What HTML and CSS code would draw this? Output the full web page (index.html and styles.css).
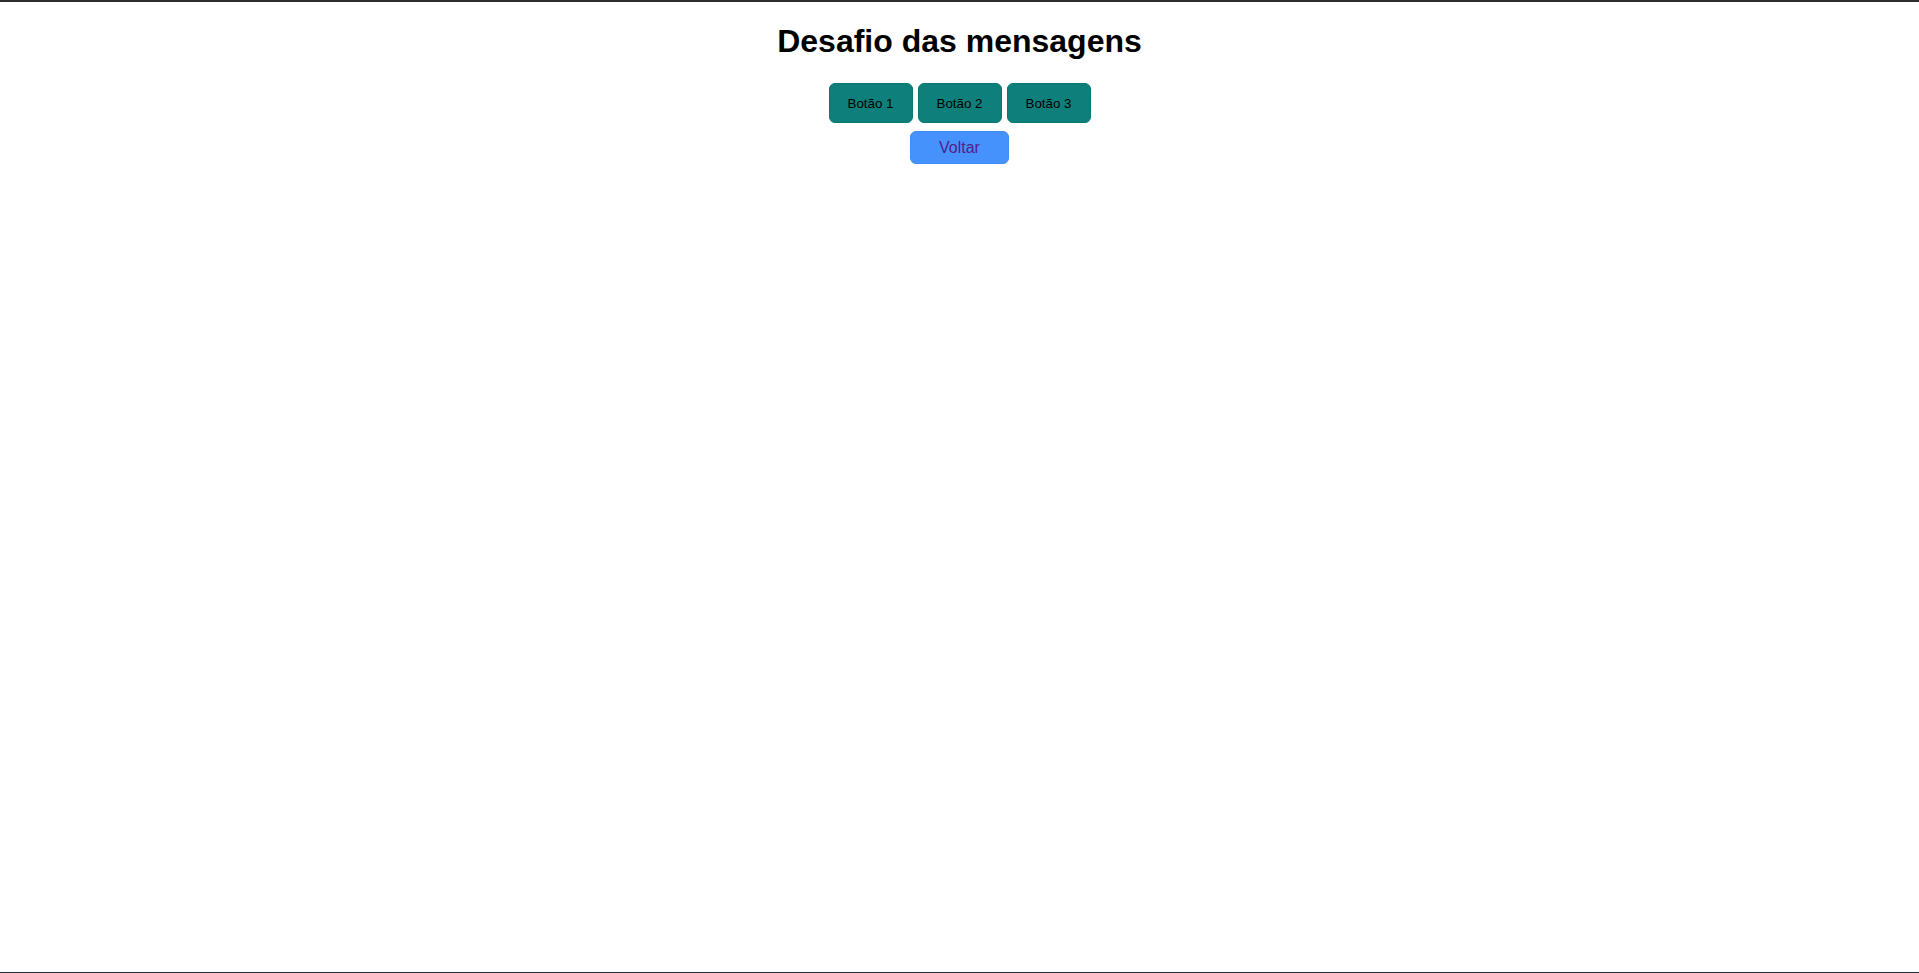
FILE: index.html
```html
<!DOCTYPE html>
<html lang="pt-BR">
<head>
<meta charset="utf-8">
<title>Desafio das mensagens</title>
<link rel="stylesheet" href="styles.css">
</head>
<body>
<main class="page">
  <h1 class="title">Desafio das mensagens</h1>
  <div class="btn-row">
    <button class="msg-btn">Botão 1</button>
    <button class="msg-btn">Botão 2</button>
    <button class="msg-btn">Botão 3</button>
  </div>
  <div class="back-row">
    <a class="back-btn" href="#">Voltar</a>
  </div>
</main>
</body>
</html>
```

FILE: styles.css
```css
html {
  height: 100%;
  box-sizing: border-box;
  border-top: 2px solid #2d2d30;
  border-bottom: 1px solid #1f2b36;
  background: #ffffff;
}

body {
  margin: 0;
  font-family: "Liberation Sans", Arial, sans-serif;
  color: #000;
}

.page {
  display: flex;
  flex-direction: column;
  align-items: center;
}

.title {
  margin: 20.5px 0 0;
  font-size: 32px;
  font-weight: bold;
  line-height: 37px;
}

.btn-row {
  margin-top: 23.5px;
  display: flex;
  gap: 5px;
}

.msg-btn {
  box-sizing: border-box;
  width: 84px;
  height: 40px;
  padding: 0;
  background: #0e7f7b;
  border: 1px solid #0b7773;
  border-radius: 6px;
  font-family: "Liberation Sans", Arial, sans-serif;
  font-size: 13.333px;
  color: #000;
}

.back-row {
  margin-top: 8px;
  display: flex;
}

.back-btn {
  box-sizing: border-box;
  display: flex;
  align-items: center;
  justify-content: center;
  width: 99px;
  height: 33px;
  background: #4592fd;
  border: 1px solid #3f8cf5;
  border-radius: 6px;
  font-size: 16px;
  color: #551a8b;
  text-decoration: none;
}
```
